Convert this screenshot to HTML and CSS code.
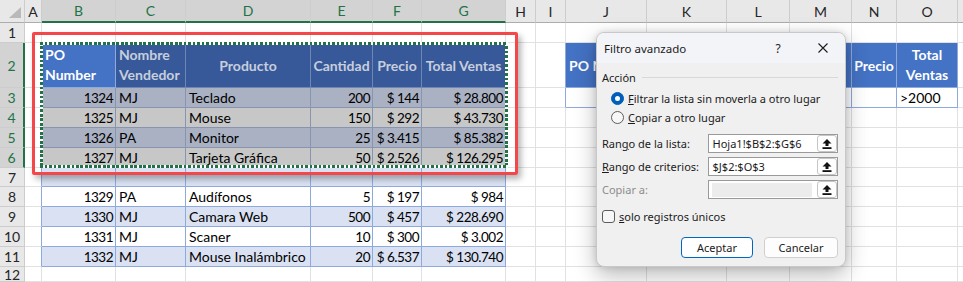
FILE: index.html
```html
<!DOCTYPE html>
<html lang="es">
<head>
    <meta charset="UTF-8">
    <title>Filtro avanzado</title>
    <link rel="stylesheet" href="styles.css">
</head>
<body>

<div class="screen">
    <div class="sheet">
        <!-- column headers -->
        <div class="c ch corner"></div>
        <div class="c ch">A</div>
        <div class="c ch hl">B</div>
        <div class="c ch hl">C</div>
        <div class="c ch hl">D</div>
        <div class="c ch hl">E</div>
        <div class="c ch hl">F</div>
        <div class="c ch hl">G</div>
        <div class="c ch">H</div>
        <div class="c ch">I</div>
        <div class="c ch">J</div>
        <div class="c ch">K</div>
        <div class="c ch">L</div>
        <div class="c ch">M</div>
        <div class="c ch">N</div>
        <div class="c ch">O</div>
        <div class="c ch"></div>

        <!-- row 1 -->
        <div class="c rh">1</div>
        <div class="c"></div><div class="c"></div><div class="c"></div><div class="c"></div>
        <div class="c"></div><div class="c"></div><div class="c"></div><div class="c"></div>
        <div class="c"></div><div class="c"></div><div class="c"></div><div class="c"></div>
        <div class="c"></div><div class="c"></div><div class="c"></div><div class="c"></div>

        <!-- row 2: headers -->
        <div class="c rh hl">2</div>
        <div class="c edge"></div>
        <div class="c tb hd"><span>PO<br>Number</span></div>
        <div class="c tb hd-sel"><span>Nombre<br>Vendedor</span></div>
        <div class="c tb hd-sel m">Producto</div>
        <div class="c tb hd-sel m">Cantidad</div>
        <div class="c tb hd-sel m">Precio</div>
        <div class="c tb hd-sel m">Total Ventas</div>
        <div class="c"></div>
        <div class="c edge"></div>
        <div class="c tb hd">PO N</div>
        <div class="c tb hd"></div>
        <div class="c tb hd"></div>
        <div class="c tb hd"></div>
        <div class="c tb hd m">Precio</div>
        <div class="c tb hd m"><span>Total<br>Ventas</span></div>
        <div class="c"></div>

        <!-- row 3 -->
        <div class="c rh hl">3</div>
        <div class="c edge"></div>
        <div class="c tb sel-band r">1324</div>
        <div class="c tb sel-band">MJ</div>
        <div class="c tb sel-band">Teclado</div>
        <div class="c tb sel-band r">200</div>
        <div class="c tb sel-band r">$ 144</div>
        <div class="c tb sel-band r">$ 28.800</div>
        <div class="c"></div>
        <div class="c edge"></div>
        <div class="c tb"></div>
        <div class="c tb"></div>
        <div class="c tb"></div>
        <div class="c tb"></div>
        <div class="c tb"></div>
        <div class="c tb">&gt;2000</div>
        <div class="c"></div>

        <!-- row 4 -->
        <div class="c rh hl">4</div>
        <div class="c edge"></div>
        <div class="c tb sel r">1325</div>
        <div class="c tb sel">MJ</div>
        <div class="c tb sel">Mouse</div>
        <div class="c tb sel r">150</div>
        <div class="c tb sel r">$ 292</div>
        <div class="c tb sel r">$ 43.730</div>
        <div class="c"></div><div class="c"></div><div class="c"></div><div class="c"></div>
        <div class="c"></div><div class="c"></div><div class="c"></div><div class="c"></div>
        <div class="c"></div>

        <!-- row 5 -->
        <div class="c rh hl">5</div>
        <div class="c edge"></div>
        <div class="c tb sel-band r">1326</div>
        <div class="c tb sel-band">PA</div>
        <div class="c tb sel-band">Monitor</div>
        <div class="c tb sel-band r">25</div>
        <div class="c tb sel-band r">$ 3.415</div>
        <div class="c tb sel-band r">$ 85.382</div>
        <div class="c"></div><div class="c"></div><div class="c"></div><div class="c"></div>
        <div class="c"></div><div class="c"></div><div class="c"></div><div class="c"></div>
        <div class="c"></div>

        <!-- row 6 -->
        <div class="c rh hl">6</div>
        <div class="c edge"></div>
        <div class="c tb sel r">1327</div>
        <div class="c tb sel">MJ</div>
        <div class="c tb sel">Tarjeta Gráfica</div>
        <div class="c tb sel r">50</div>
        <div class="c tb sel r">$ 2.526</div>
        <div class="c tb sel r">$ 126.295</div>
        <div class="c"></div><div class="c"></div><div class="c"></div><div class="c"></div>
        <div class="c"></div><div class="c"></div><div class="c"></div><div class="c"></div>
        <div class="c"></div>

        <!-- row 7 (empty, banded) -->
        <div class="c rh">7</div>
        <div class="c edge"></div>
        <div class="c tb band"></div>
        <div class="c tb band"></div>
        <div class="c tb band"></div>
        <div class="c tb band"></div>
        <div class="c tb band"></div>
        <div class="c tb band"></div>
        <div class="c"></div><div class="c"></div><div class="c"></div><div class="c"></div>
        <div class="c"></div><div class="c"></div><div class="c"></div><div class="c"></div>
        <div class="c"></div>

        <!-- row 8 -->
        <div class="c rh">8</div>
        <div class="c edge"></div>
        <div class="c tb r">1329</div>
        <div class="c tb">PA</div>
        <div class="c tb">Audífonos</div>
        <div class="c tb r">5</div>
        <div class="c tb r">$ 197</div>
        <div class="c tb r">$ 984</div>
        <div class="c"></div><div class="c"></div><div class="c"></div><div class="c"></div>
        <div class="c"></div><div class="c"></div><div class="c"></div><div class="c"></div>
        <div class="c"></div>

        <!-- row 9 -->
        <div class="c rh">9</div>
        <div class="c edge"></div>
        <div class="c tb band r">1330</div>
        <div class="c tb band">MJ</div>
        <div class="c tb band">Camara Web</div>
        <div class="c tb band r">500</div>
        <div class="c tb band r">$ 457</div>
        <div class="c tb band r">$ 228.690</div>
        <div class="c"></div><div class="c"></div><div class="c"></div><div class="c"></div>
        <div class="c"></div><div class="c"></div><div class="c"></div><div class="c"></div>
        <div class="c"></div>

        <!-- row 10 -->
        <div class="c rh">10</div>
        <div class="c edge"></div>
        <div class="c tb r">1331</div>
        <div class="c tb">MJ</div>
        <div class="c tb">Scaner</div>
        <div class="c tb r">10</div>
        <div class="c tb r">$ 300</div>
        <div class="c tb r">$ 3.002</div>
        <div class="c"></div><div class="c"></div><div class="c"></div><div class="c"></div>
        <div class="c"></div><div class="c"></div><div class="c"></div><div class="c"></div>
        <div class="c"></div>

        <!-- row 11 -->
        <div class="c rh">11</div>
        <div class="c edge"></div>
        <div class="c tb band r">1332</div>
        <div class="c tb band">MJ</div>
        <div class="c tb band">Mouse Inalámbrico</div>
        <div class="c tb band r">20</div>
        <div class="c tb band r">$ 6.537</div>
        <div class="c tb band r">$ 130.740</div>
        <div class="c"></div><div class="c"></div><div class="c"></div><div class="c"></div>
        <div class="c"></div><div class="c"></div><div class="c"></div><div class="c"></div>
        <div class="c"></div>

        <!-- row 12 -->
        <div class="c rh">12</div>
        <div class="c"></div><div class="c"></div><div class="c"></div><div class="c"></div>
        <div class="c"></div><div class="c"></div><div class="c"></div><div class="c"></div>
        <div class="c"></div><div class="c"></div><div class="c"></div><div class="c"></div>
        <div class="c"></div><div class="c"></div><div class="c"></div><div class="c"></div>
    </div>

    <!-- overlays -->
    <div class="red-box"></div>
    <div class="ants"></div>

    <div class="dialog">
        <div class="dlg-title">
            <span class="dlg-name">Filtro avanzado</span>
            <span class="dlg-help">?</span>
            <span class="dlg-close">
                <svg width="10" height="10" viewBox="0 0 10 10"><path d="M0.5 0.5 L9.5 9.5 M9.5 0.5 L0.5 9.5" stroke="#1b1b1b" stroke-width="1.1" fill="none"/></svg>
            </span>
        </div>
        <div class="dlg-body">
            <div class="group">Acción</div>
            <div class="opt"><span class="radio on"></span><span><u>F</u>iltrar la lista sin moverla a otro lugar</span></div>
            <div class="opt"><span class="radio"></span><span><u>C</u>opiar a otro lugar</span></div>

            <div class="fields">
                <div class="field">
                    <span class="flabel">Ran<u>g</u>o de la lista:</span>
                    <div class="box">
                        <span class="val">Hoja1!$B$2:$G$6</span>
                        <span class="pick"><svg width="10" height="10" viewBox="0 0 10 10"><polygon points="5,0 9.5,4.6 6.5,4.6 6.5,7 3.5,7 3.5,4.6 0.5,4.6" fill="#111"/><rect x="0.5" y="8.2" width="9" height="1.8" fill="#111"/></svg></span>
                    </div>
                </div>
                <div class="field">
                    <span class="flabel"><u>R</u>ango de criterios:</span>
                    <div class="box">
                        <span class="val">$J$2:$O$3</span>
                        <span class="pick"><svg width="10" height="10" viewBox="0 0 10 10"><polygon points="5,0 9.5,4.6 6.5,4.6 6.5,7 3.5,7 3.5,4.6 0.5,4.6" fill="#111"/><rect x="0.5" y="8.2" width="9" height="1.8" fill="#111"/></svg></span>
                    </div>
                </div>
                <div class="field off">
                    <span class="flabel">Copiar a:</span>
                    <div class="box">
                        <span class="val"></span>
                        <span class="pick"><svg width="10" height="10" viewBox="0 0 10 10"><polygon points="5,0 9.5,4.6 6.5,4.6 6.5,7 3.5,7 3.5,4.6 0.5,4.6" fill="#111"/><rect x="0.5" y="8.2" width="9" height="1.8" fill="#111"/></svg></span>
                    </div>
                </div>
            </div>

            <div class="check"><span class="cbox"></span><span><u>s</u>olo registros únicos</span></div>

            <div class="actions">
                <button class="btn primary">Aceptar</button>
                <button class="btn">Cancelar</button>
            </div>
        </div>
    </div>
</div>

</body>
</html>
```

FILE: styles.css
```css
body { margin: 0; background: #fff; font-family: Lato, "Liberation Sans", sans-serif; }
.screen { position: relative; width: 963px; height: 282px; overflow: hidden; }

/* worksheet grid */
.sheet {
    display: grid;
    grid-template-columns: 25px 17px 74px 70px 125px 62px 49px 84px 30px 30px 81px 80px 63px 62px 45px 61px 1fr;
    grid-template-rows: 23px 20px 45px 20px 20px 20px 20px 19px 20px 20px 20px 20px 1fr;
    height: 282px;
    font-size: 14px;
    color: #000;
}
.c {
    display: flex; align-items: center;
    padding: 0 3px;
    border-right: 1px solid #e1e1e1; border-bottom: 1px solid #e1e1e1;
    white-space: nowrap; overflow: hidden; min-width: 0;
}
.c span { white-space: nowrap; line-height: 20px; }
.r { justify-content: flex-end; padding-right: 2px; font-size: 13.5px; letter-spacing: -0.5px; }
.m { justify-content: center; text-align: center; padding: 0; }

/* headers */
.ch, .rh { justify-content: center; padding: 0; background: #e8e8e8; color: #262626; border-color: #cdcdcd; }
.ch { border-bottom-color: #adadad; }
.ch.hl { background: #d3d3d3; color: #217346; border-bottom: 2px solid #217346; }
.rh.hl { background: #d3d3d3; color: #217346; border-right: 2px solid #217346; }
.corner { position: relative; }
.corner::after {
    content: ""; position: absolute; right: 3px; bottom: 4px; width: 12px; height: 11px;
    background: #b9b9b9; clip-path: polygon(100% 0, 100% 100%, 0 100%);
}

/* table cells */
.tb { border-color: #8ea9db; }
.edge { border-right-color: #8ea9db; }
.band { background: #d9e1f2; }
.hd { background: #4472c4; color: #fff; font-weight: bold; }
.hd-sel { background: #37599a; color: #c7cedc; font-weight: bold; border-color: #6f86b0; }
.sel { background: #c7c7c7; border-color: #8795b0; }
.sel-band { background: #a9b1c3; border-color: #8795b0; }

/* overlays */
.red-box {
    position: absolute; left: 32px; top: 32px; width: 486px; height: 143px;
    box-sizing: border-box; border: 3px solid #f4474a; border-radius: 2px;
    box-shadow: 3px 4px 6px rgba(0, 0, 0, 0.3);
}
.ants {
    position: absolute; left: 40px; top: 42px; width: 468px; height: 126px;
    background:
        repeating-linear-gradient(90deg, #217346 0 2.5px, #fff 2.5px 4.5px) left top / 100% 3px no-repeat,
        repeating-linear-gradient(90deg, #217346 0 2.5px, #fff 2.5px 4.5px) left bottom / 100% 3px no-repeat,
        repeating-linear-gradient(180deg, #217346 0 2.5px, #fff 2.5px 4.5px) left top / 3px 100% no-repeat,
        repeating-linear-gradient(180deg, #217346 0 2.5px, #fff 2.5px 4.5px) right top / 3px 100% no-repeat;
}

/* dialog */
.dialog {
    position: absolute; left: 596px; top: 32px; width: 250px; height: 235px;
    box-sizing: border-box; overflow: hidden;
    background: #f0f0f0; border: 1px solid #c8c8c8; border-radius: 8px;
    box-shadow: 0 8px 22px rgba(0, 0, 0, 0.28), 0 0 6px rgba(0, 0, 0, 0.12);
    font-family: "Noto Sans", sans-serif; font-size: 11px; color: #1b1b1b;
}
.dialog u { text-underline-offset: 1px; }
.dlg-title { display: flex; align-items: center; height: 30px; padding: 0 10px 0 7px; background: #f3f4f8; font-size: 11.5px; }
.dlg-help { margin-left: auto; width: 24px; text-align: center; font-size: 12px; }
.dlg-close { width: 24px; margin-left: 21px; display: flex; justify-content: center; }

.dlg-body { padding: 0 7px 0 5px; }
.group { display: flex; align-items: center; gap: 6px; height: 16px; margin-top: 6px; }
.group::after { content: ""; flex: 1; border-top: 1px solid #d9d9d9; }

.opt { display: flex; align-items: center; gap: 4px; height: 19px; padding-left: 9px; }
.group + .opt { margin-top: 4px; }
.radio { width: 13px; height: 13px; box-sizing: border-box; border-radius: 50%; border: 1px solid #5c5c5c; background: #f7f7f7; }
.radio.on { display: grid; place-items: center; background: #005fb8; border-color: #005fb8; }
.radio.on::after { content: ""; width: 5px; height: 5px; border-radius: 50%; background: #fff; }

.fields { display: flex; flex-direction: column; gap: 4px; margin-top: 7px; }
.field { display: flex; align-items: center; height: 19px; }
.flabel { width: 106px; }
.box {
    width: 131px; height: 19px; box-sizing: border-box;
    display: flex; align-items: center;
    background: #fff; border: 1px solid #9a9a9a;
}
.val { flex: 1; padding-left: 4px; }
.pick {
    width: 20px; height: 17px; box-sizing: border-box;
    display: flex; align-items: center; justify-content: center;
    background: #fdfdfd; border: 1px solid #c6c6c6; border-radius: 3px;
}
.field.off .flabel { color: #8c8c8c; }
.field.off .val { align-self: stretch; margin: 2px 5px 1px 3px; padding: 0; background: #ececec; }

.check { display: flex; align-items: center; gap: 4px; height: 19px; margin-top: 8px; }
.cbox { width: 13px; height: 13px; box-sizing: border-box; border: 1px solid #5c5c5c; border-radius: 3px; background: #f7f7f7; }

.actions { display: flex; justify-content: flex-end; gap: 11px; margin-top: 11px; }
.btn {
    width: 74px; height: 21px; padding: 0;
    font: inherit; color: #1b1b1b;
    background: #fdfdfd; border: 1px solid #d0d0d0; border-radius: 4px;
}
.btn.primary { width: 72px; background: #fff; border-color: #0067c0; }
```
